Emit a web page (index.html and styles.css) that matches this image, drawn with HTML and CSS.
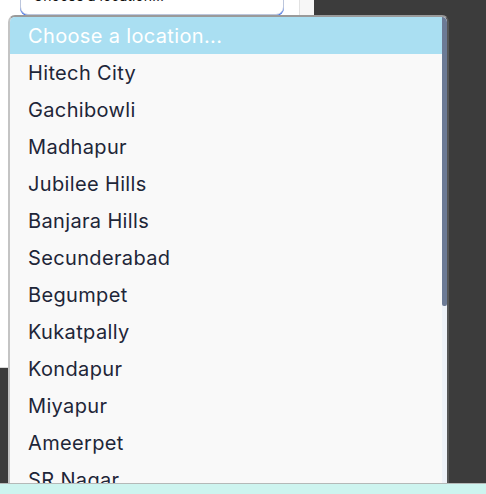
FILE: index.html
```html
<!DOCTYPE html>
<html>
<head>
<meta charset="utf-8">
<link rel="stylesheet" href="styles.css">
</head>
<body>
<div class="page">
  <div class="top">
    <div class="card">
      <div class="select">
        <span class="select-text">Choose a location...</span>
        <span class="caret">&#9662;</span>
      </div>
    </div>
    <div class="gutter"></div>
  </div>
  <div class="spacer"></div>
  <div class="strip"></div>
</div>
<div class="popup">
  <div class="list">
    <div class="opt selected">Choose a location...</div>
    <div class="opt">Hitech City</div>
    <div class="opt">Gachibowli</div>
    <div class="opt">Madhapur</div>
    <div class="opt">Jubilee Hills</div>
    <div class="opt">Banjara Hills</div>
    <div class="opt">Secunderabad</div>
    <div class="opt">Begumpet</div>
    <div class="opt">Kukatpally</div>
    <div class="opt">Kondapur</div>
    <div class="opt">Miyapur</div>
    <div class="opt">Ameerpet</div>
    <div class="opt">SR Nagar</div>
    <div class="opt">Kothaguda</div>
  </div>
  <div class="scroll">
    <div class="thumb"></div>
  </div>
</div>
</body>
</html>
```
FILE: styles.css
```css
html, body {
  margin: 0;
  padding: 0;
}
body {
  width: 486px;
  height: 494px;
  overflow: hidden;
  background: #3c3c3c;
  font-family: Inter, "Noto Sans", sans-serif;
  position: relative;
}
.page {
  height: 494px;
  display: flex;
  flex-direction: column;
}
.top {
  display: flex;
  height: 368px;
}
.card {
  width: 299px;
  background: #ffffff;
  border-bottom: 1px solid #d8d8d8;
  padding-left: 20px;
  box-sizing: border-box;
}
.gutter {
  width: 15px;
  background: #f7f7f7;
  border-left: 1px solid #e2e2e2;
  border-bottom: 1px solid #d8d8d8;
  box-sizing: border-box;
}
.select {
  width: 264px;
  height: 40px;
  margin-top: -25px;
  box-sizing: border-box;
  border: 1px solid #bcc6dc;
  border-radius: 8px;
  box-shadow: 0 1px 0 0 #4a78ec;
  display: flex;
  align-items: center;
  justify-content: space-between;
  padding: 0 14px 0 12px;
  font-size: 14px;
  color: #111;
  background: #fff;
}
.caret {
  font-size: 9px;
  color: #666;
}
.spacer {
  flex: 1;
}
.strip {
  height: 10px;
  background: #cdf4ef;
  border-top: 1px solid #b4b9b8;
  position: relative;
  z-index: 2;
}
.popup {
  position: absolute;
  left: 8px;
  top: 15px;
  width: 441px;
  height: 500px;
  box-sizing: border-box;
  border: 2px solid #9a9a9a;
  border-left-color: #c4c4c4;
  border-right-color: #565656;
  border-radius: 7px 7px 0 0;
  background: #f9f9f9;
  display: flex;
  overflow: hidden;
  z-index: 1;
}
.list {
  flex: 1;
}
.opt {
  height: 37px;
  line-height: 37px;
  padding-left: 18px;
  padding-top: 1px;
  box-sizing: border-box;
  font-size: 20px;
  letter-spacing: 0.35px;
  color: #1e2638;
  white-space: nowrap;
}
.opt.selected {
  background: #aadff2;
  color: #ffffff;
}
.scroll {
  width: 5px;
  background: #eef2f8;
}
.thumb {
  height: 289px;
  background: #6c7a95;
  border-radius: 0 0 2px 2px;
}
```
